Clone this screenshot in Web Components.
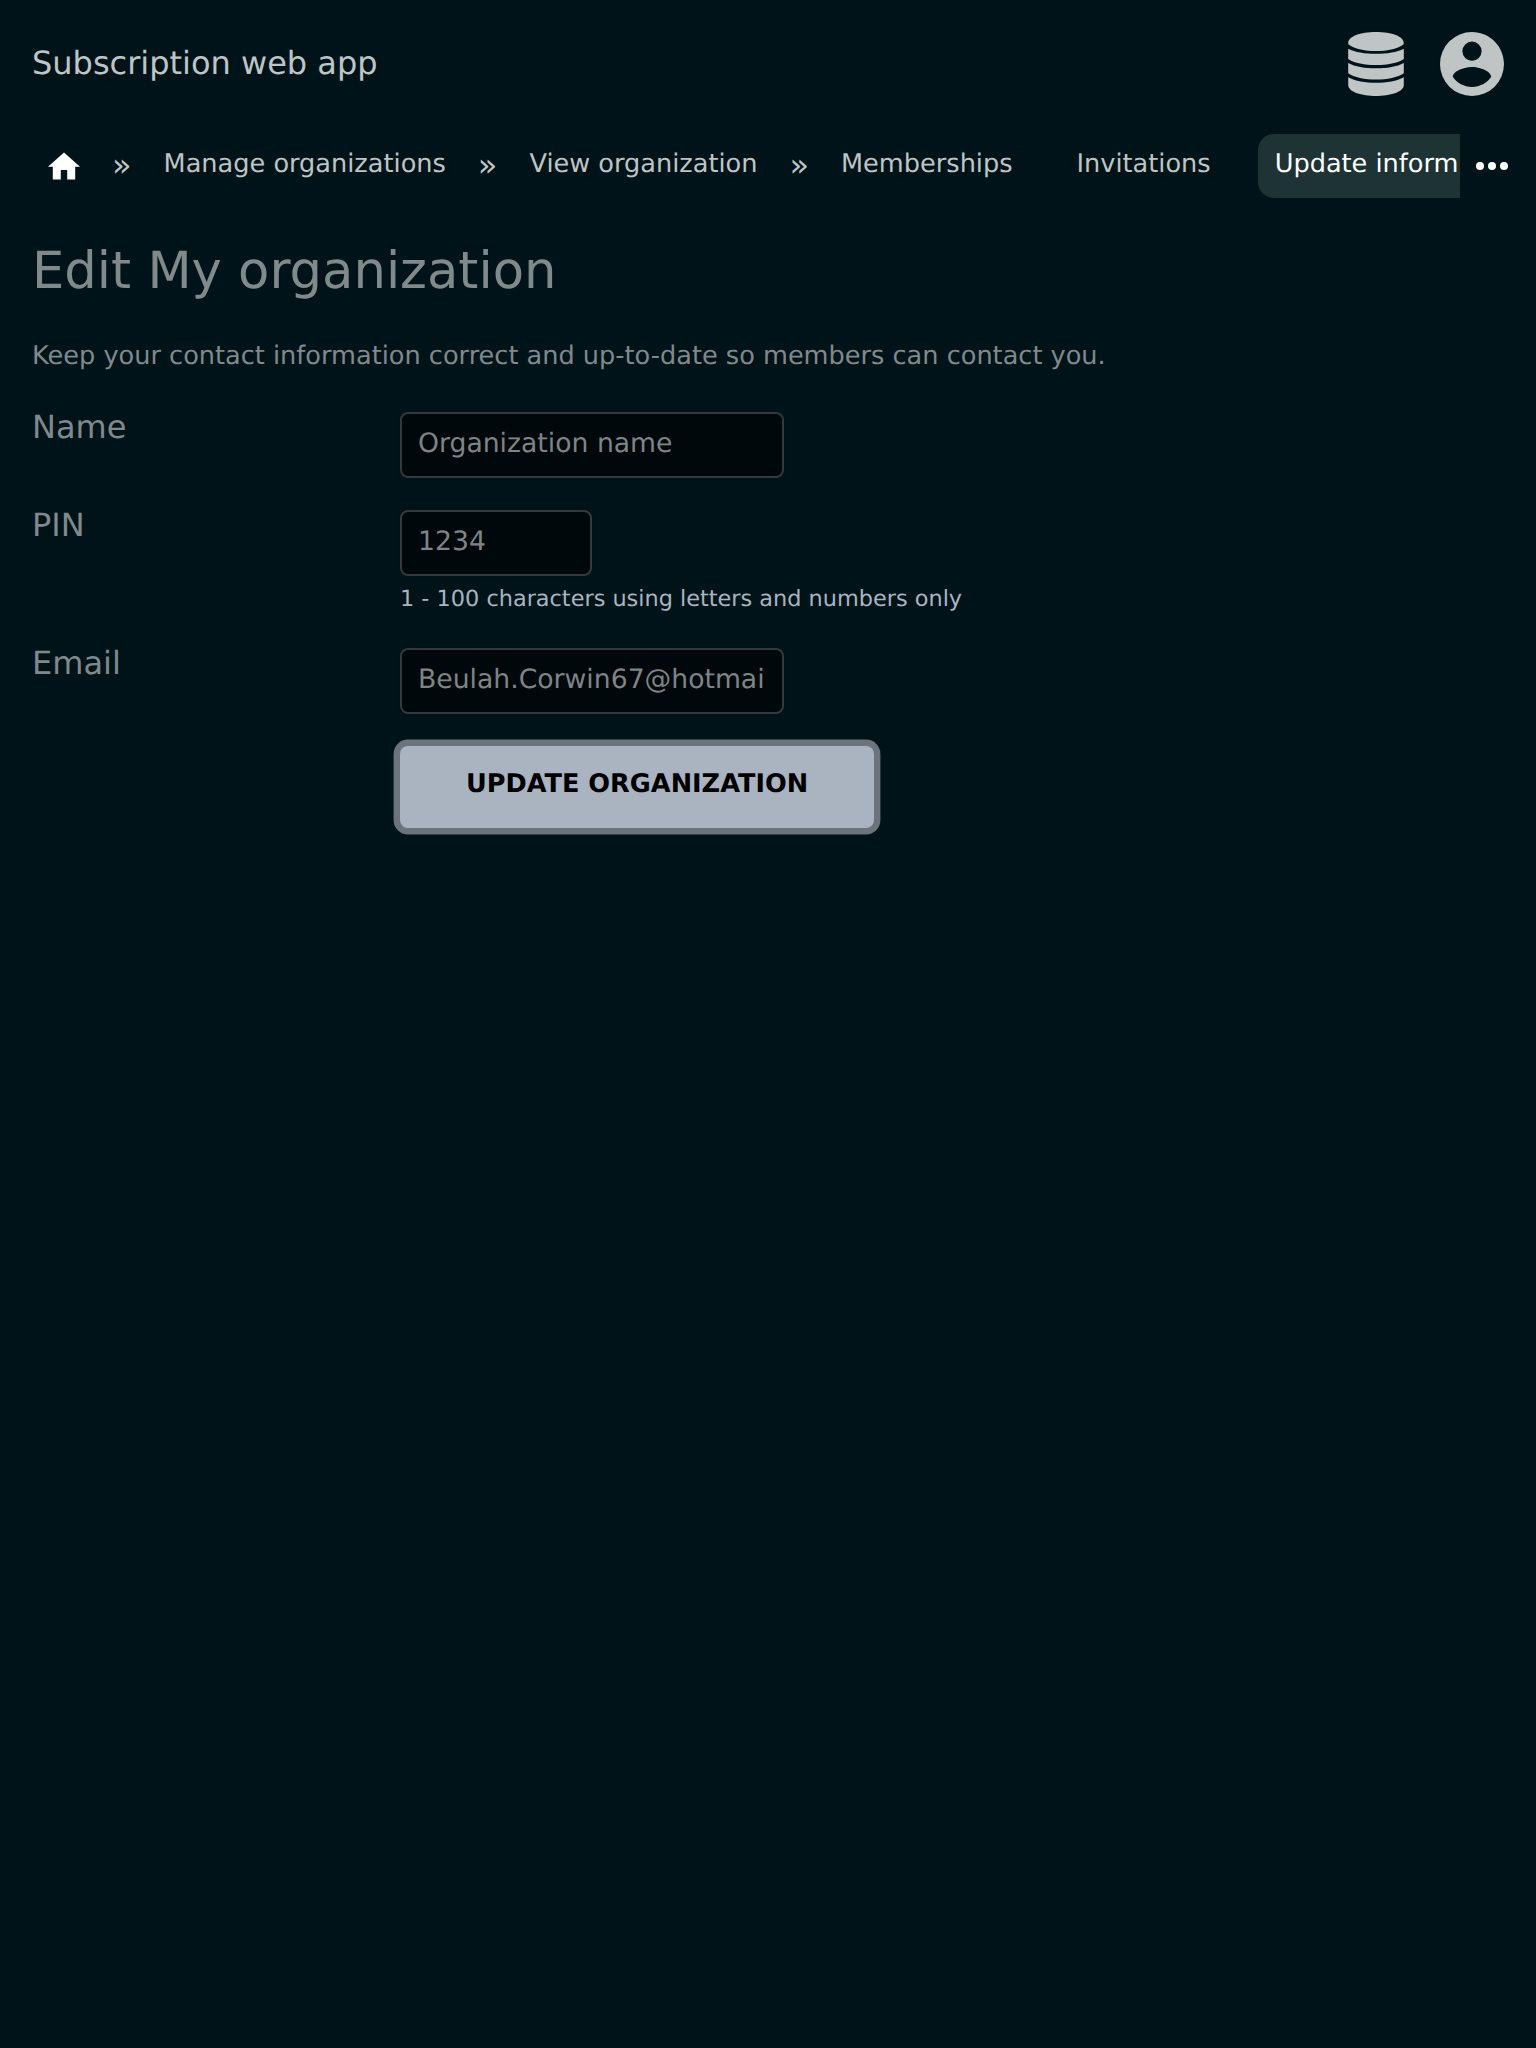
<!DOCTYPE html>
<html lang="en">
<head>
<meta charset="utf-8">
<title>Subscription web app</title>
<style>
  html, body { margin: 0; background: #001318; }
  body { min-height: 2048px; font-family: "DejaVu Sans", sans-serif; color: #bfc4c5; font-size: 25.6px; text-rendering: geometricPrecision; }
</style>
</head>
<body>
<app-header>Subscription web app</app-header>
<app-nav>
  <nav-home></nav-home><nav-sep></nav-sep>
  <nav-item>Manage organizations</nav-item><nav-sep></nav-sep>
  <nav-item>View organization</nav-item><nav-sep></nav-sep>
  <nav-item>Memberships</nav-item>
  <nav-item spaced>Invitations</nav-item>
  <nav-item spaced active>Update inform</nav-item>
</app-nav>
<org-form>
  <span slot="title">Edit My organization</span>
  <span slot="intro">Keep your contact information correct and up-to-date so members can contact you.</span>
  <form-row label="Name"><text-field>Organization name</text-field></form-row>
  <form-row label="PIN"><text-field short>1234</text-field><span slot="hint">1 - 100 characters using letters and numbers only</span></form-row>
  <form-row label="Email"><text-field>Beulah.Corwin67@hotmai</text-field></form-row>
  <submit-button slot="action">UPDATE ORGANIZATION</submit-button>
</org-form>
<script>
const define = (name, html) => customElements.define(name, class extends HTMLElement {
  constructor() {
    super();
    this.attachShadow({ mode: 'open' }).innerHTML = html;
  }
  connectedCallback() {
    const label = this.shadowRoot.querySelector('label');
    if (label) label.textContent = this.getAttribute('label');
  }
});

define('app-header', `
<style>
  :host { display: flex; align-items: center; justify-content: space-between; height: 128px; padding: 0 32px; box-sizing: border-box; }
  h1 { margin: 0 0 2px; font-size: 32px; line-height: 40px; font-weight: 400; }
  div { display: flex; gap: 36px; }
  svg { display: block; fill: #bfc4c5; }
</style>
<h1><slot></slot></h1>
<div>
  <svg width="56" height="64" viewBox="0 0 56 64"><path d="M.2 11C.2 4.5 12 0 28 0S55.8 4.5 55.8 11C55.8 11.8 55.3 12.6 54.6 13C48.5 17 39 19 28 19S7.5 17 1.4 13C.7 12.6 .2 11.8 .2 11ZM.2 16.7C7 20.2 17 21.8 28 21.8S49 20.2 55.8 16.7V27C50 31 39 33 28 33S6 31 .2 27ZM.2 30.9C7 34.6 17 36.3 28 36.3S49 34.6 55.8 30.9V41.3C50 45.5 39 47.6 28 47.6S6 45.5 .2 41.3ZM.2 45.2C7 49 17 50.7 28 50.7S49 49 55.8 45.2V53C55.8 60 42 64 28 64S.2 60 .2 53Z"/></svg>
  <svg width="64" height="64" viewBox="2 2 20 20"><path d="M12 19.2C9.5 19.2 7.29 17.92 6 16C6.03 14 10 12.9 12 12.9C14 12.9 17.97 14 18 16C16.71 17.92 14.5 19.2 12 19.2M12 5A3 3 0 0 1 15 8A3 3 0 0 1 12 11A3 3 0 0 1 9 8A3 3 0 0 1 12 5M12 2A10 10 0 0 0 2 12A10 10 0 0 0 12 22A10 10 0 0 0 22 12C22 6.47 17.5 2 12 2Z"/></svg>
</div>`);

define('app-nav', `
<style>
  :host { display: flex; height: 76px; padding: 6px 0 0 32px; box-sizing: border-box; }
  div { display: flex; width: 1428px; height: 64px; overflow: hidden; white-space: nowrap; }
  svg { display: block; margin: 16px; fill: #fff; }
</style>
<div><slot></slot></div>
<svg width="32" height="32" viewBox="0 0 32 32"><circle cx="4" cy="16" r="4"/><circle cx="16" cy="16" r="4"/><circle cx="28" cy="16" r="4"/></svg>`);

define('nav-home', `
<style>:host { display: block; flex: none; padding: 12px 16px; } svg { display: block; fill: #fff; }</style>
<svg width="32" height="40" viewBox="2 0 20 25"><path d="M10 21V15H14V21H19V13H22L12 4L2 13H5V21Z"/></svg>`);

define('nav-sep', `
<style>:host { display: block; flex: none; padding: 0 16px; font-size: 32px; line-height: 63px; }</style>»`);

define('nav-item', `
<style>
  :host { display: block; flex: none; padding: 0 16px; height: 64px; line-height: 60px; box-sizing: border-box; border-radius: 16px; }
  :host([spaced]) { margin-left: 32px; }
  :host([active]) { margin-left: 31.4px; padding-left: 16.6px; background: #1d3334; color: #fff; border-radius: 16px 0 0 16px; }
</style>
<slot></slot>`);

define('org-form', `
<style>
  :host { display: block; padding: 33px 32px 32px; color: #80898b; }
  h2 { margin: 0; font-size: 51.2px; line-height: 68px; font-weight: 400; }
  p { margin: 33px 0 0; line-height: 36px; white-space: nowrap; }
  .rows { display: flex; flex-direction: column; margin-top: 38px; }
  .action { display: flex; padding-left: 368px; }
</style>
<h2><slot name="title"></slot></h2>
<p><slot name="intro"></slot></p>
<div class="rows"><slot></slot></div>
<div class="action"><slot name="action"></slot></div>`);

define('form-row', `
<style>
  :host { display: flex; margin-bottom: 32px; }
  label { width: 368px; font-size: 32px; line-height: 30px; }
  ::slotted(span) { display: block; height: 40px; line-height: 46px; font-size: 22.4px; color: #a9b4c0; white-space: nowrap; }
</style>
<label></label>
<div><slot></slot><slot name="hint"></slot></div>`);

define('text-field', `
<style>
  :host { display: block; width: 384px; height: 66px; box-sizing: border-box; border: 2px solid #33393d; border-radius: 8px; background: #00080b; padding: 0 16px; font-size: 26.667px; line-height: 60px; white-space: nowrap; overflow: hidden; color: #7f8485; }
  :host([short]) { width: 192px; }
</style>
<slot></slot>`);

define('submit-button', `
<style>
  :host { display: block; width: 474px; height: 82px; box-sizing: border-box; border-radius: 8px; background: #a9b4c0; box-shadow: 0 0 0 6.4px #6b747c; color: #000; font-weight: 700; text-align: center; line-height: 76px; }
</style>
<slot></slot>`);
</script>
</body>
</html>
